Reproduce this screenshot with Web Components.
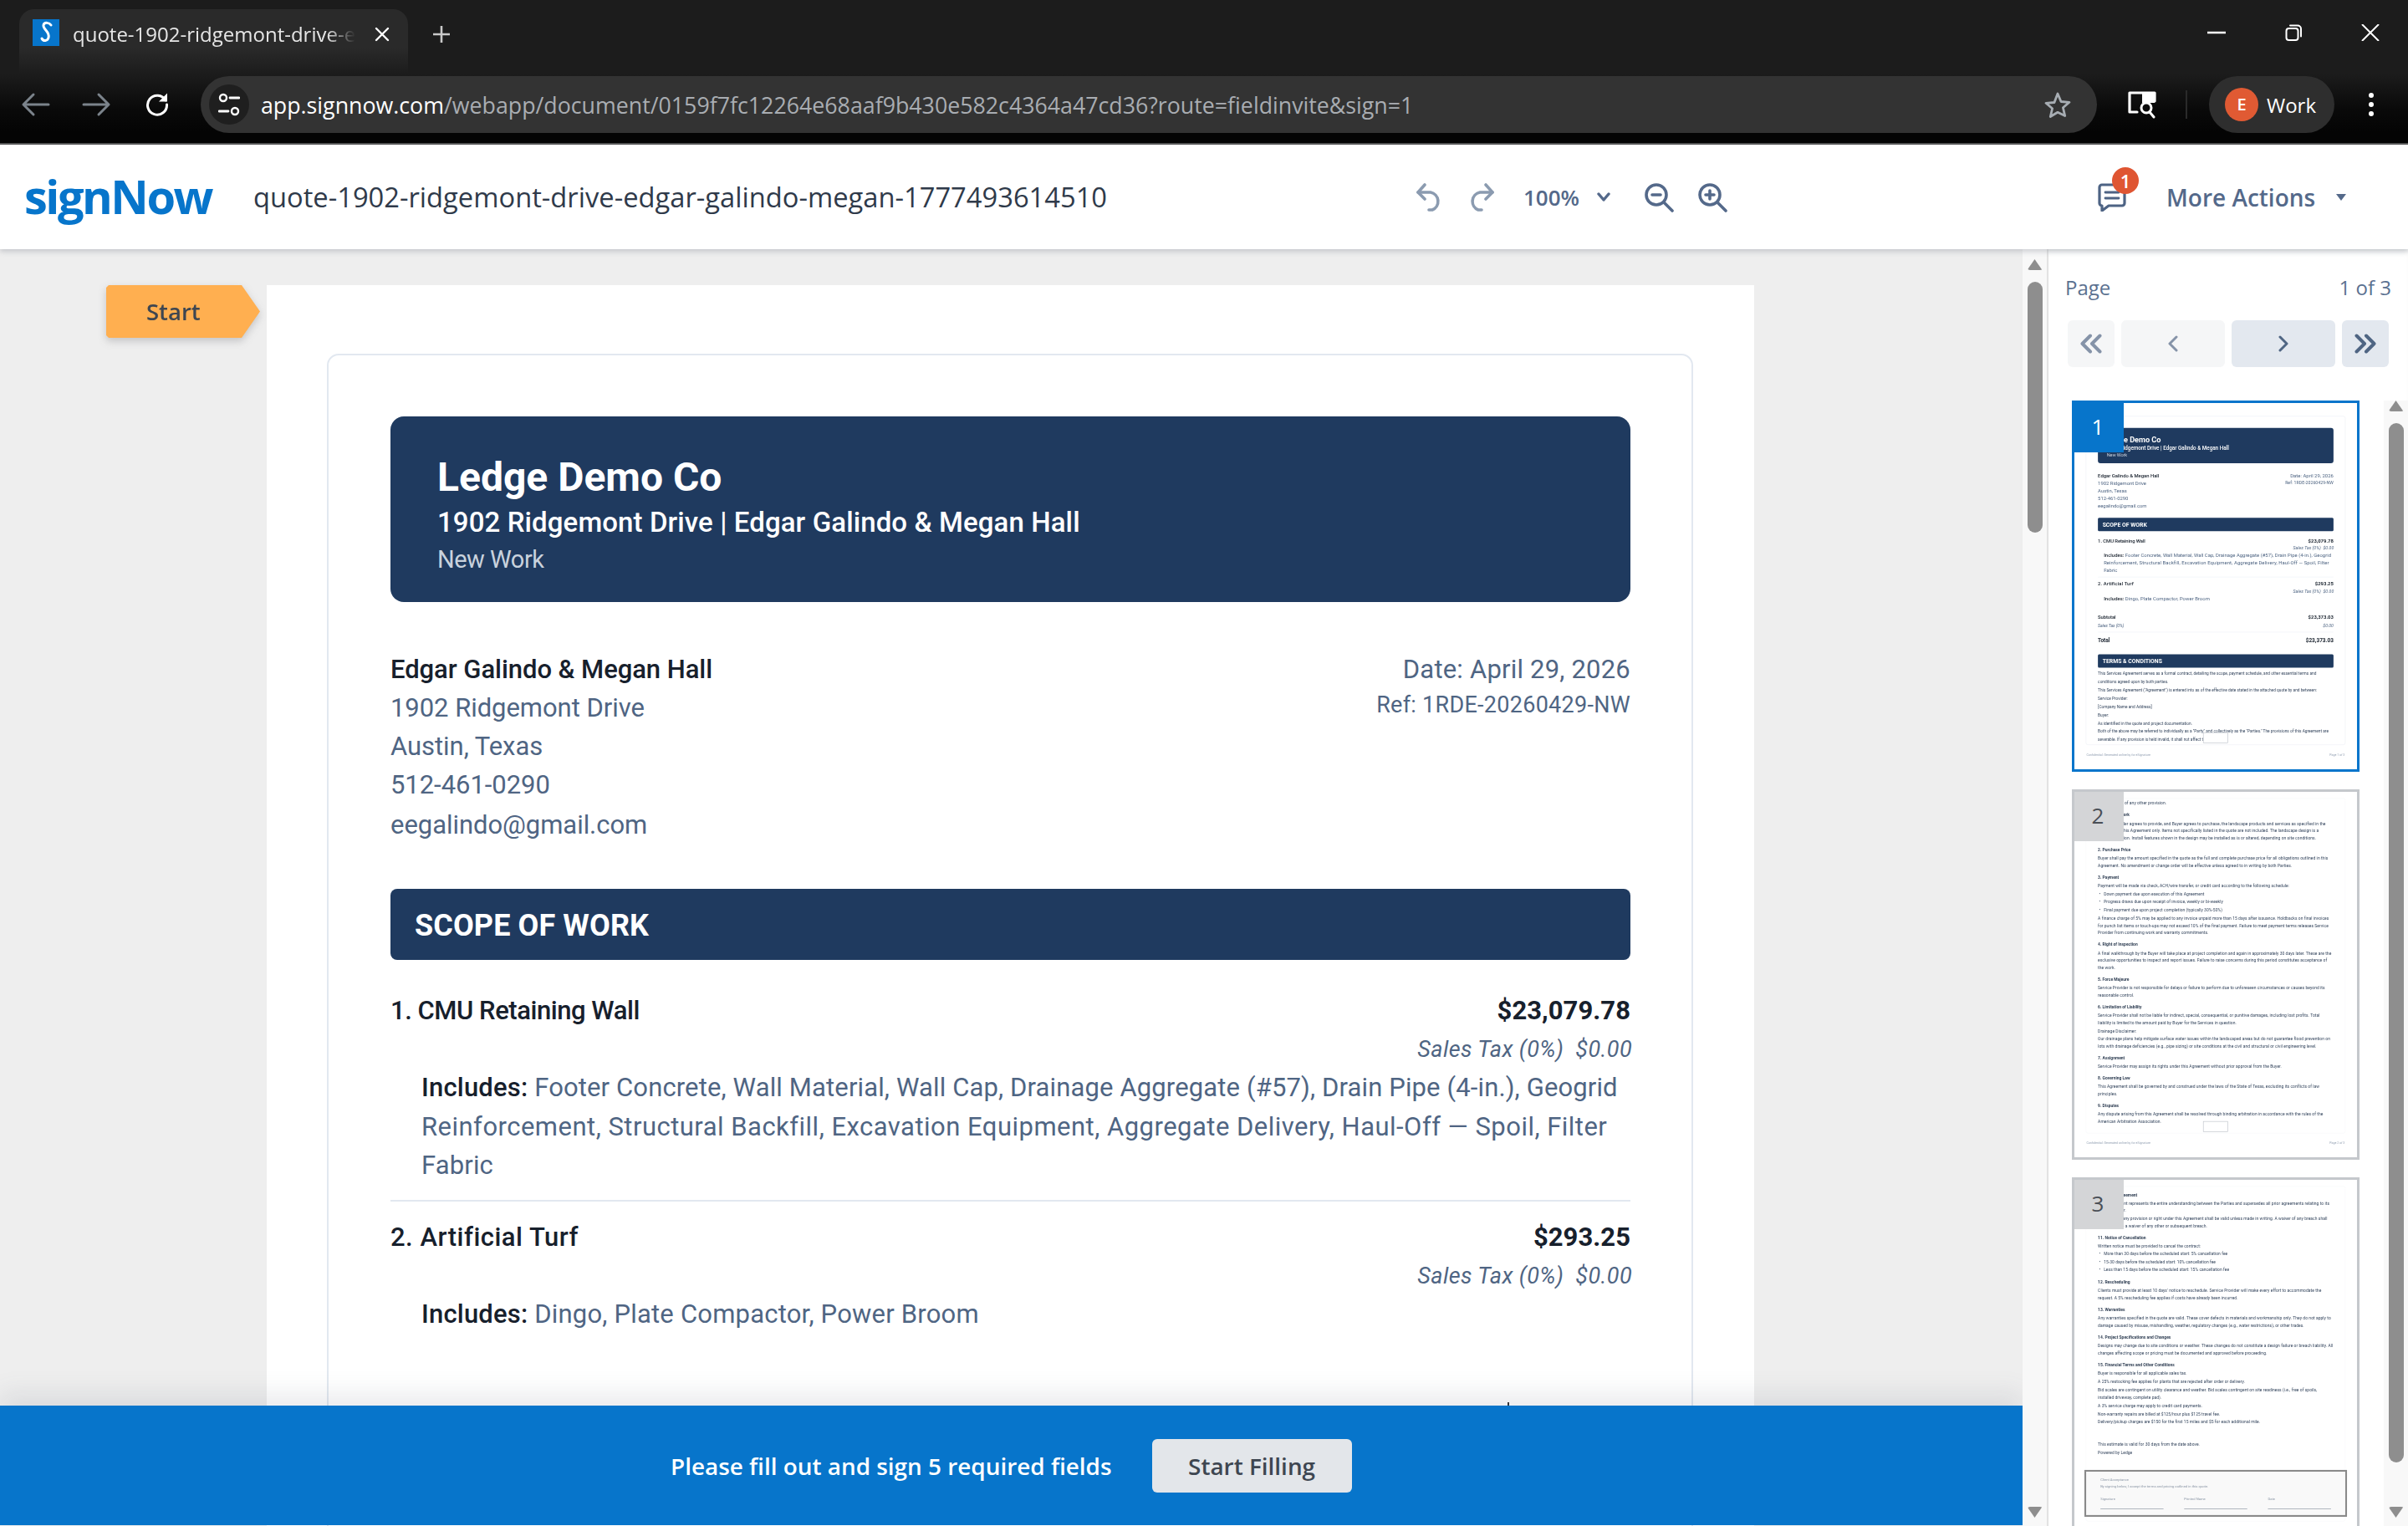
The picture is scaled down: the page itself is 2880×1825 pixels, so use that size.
<!doctype html>
<html lang="en">
<head>
<meta charset="utf-8">
<title>signNow</title>
<style>
  html, body { margin: 0; height: 100%; }
  body { width: 2880px; height: 1825px; overflow: hidden; display: flex; flex-direction: column; font-family: "Open Sans", sans-serif; }
</style>
</head>
<body>
<browser-chrome></browser-chrome>
<sn-header></sn-header>
<sn-workspace></sn-workspace>

<script>
// small helper so every element below is just a style string and a markup string
function shell(name, css, html, setup) {
  customElements.define(name, class extends HTMLElement {
    connectedCallback() {
      if (this.shadowRoot) return;
      const root = this.attachShadow({ mode: "open" });
      const body = typeof html === "function" ? html(this) : html;
      root.innerHTML = `<style>${css}</style>${body}`;
      if (setup) setup(root, this);
    }
  });
}

const svg = (w, h, box, inner, extra = "") =>
  `<svg width="${w}" height="${h}" viewBox="${box}" fill="none" stroke-linecap="round" stroke-linejoin="round" ${extra}>${inner}</svg>`;

// ---- browser frame ----
shell("browser-chrome", `
  :host { display: block; flex: none; height: 173px; box-sizing: border-box; border-bottom: 2px solid #565656; color: #fff; }
  .strip { height: 88px; background: #1c1c1c; display: flex; align-items: flex-start; padding-left: 23px; box-sizing: border-box; position: relative; }
  .tab { width: 465px; height: 77px; margin-top: 11px; border-radius: 18px 18px 0 0; background: linear-gradient(#2a2a2a, #2a2a2a 60%, #1c1c1c); display: flex; align-items: flex-start; box-sizing: border-box; padding: 12px 0 0 16px; }
  .fav { width: 32px; height: 32px; background: #0775cb; display: flex; align-items: center; justify-content: center; flex: none; }
  .tab span { margin-left: 16px; width: 338px; overflow: hidden; white-space: nowrap; font-size: 24px; line-height: 36px; color: #e6e6e6; -webkit-mask-image: linear-gradient(90deg, #000 90%, transparent); mask-image: linear-gradient(90deg, #000 90%, transparent); }
  .close { margin: 8px 0 0 22px; display: flex; }
  .plus { margin: 30px 0 0 29px; display: flex; }
  .win { margin-left: auto; display: flex; gap: 71px; padding: 29px 34px 0 0; align-items: center; height: 20px; }
  .bar { height: 83px; background: linear-gradient(#1c1c1c, #0a0a0a 50%, #040404 85%); display: flex; align-items: flex-start; position: relative; }
  .nav { display: flex; width: 240px; flex: none; height: 68px; margin-top: 3px; align-items: center; padding-left: 25px; box-sizing: border-box; }
  .nav svg + svg { margin-left: 36px; }
  .nav svg:last-child { margin-left: 40px; }
  .omni { flex: none; width: 2268px; height: 68px; margin-top: 3px; border-radius: 34px; background: #333; display: flex; align-items: center; box-sizing: border-box; padding-left: 10px; }
  .tune { width: 48px; height: 48px; border-radius: 50%; background: #1f1f1f; display: flex; align-items: center; justify-content: center; flex: none; }
  .url { margin-left: 14px; font-size: 26.75px; white-space: nowrap; color: #a9adb2; flex: 1; }
  .url b { font-weight: 400; color: #fff; }
  .omni svg.star { margin-right: 31px; }
  .tools { display: flex; align-items: center; height: 68px; margin-top: 3px; flex: 1; }
  .lens { margin-left: 36px; display: flex; }
  .sep { width: 2px; height: 34px; background: #2a2a2a; margin-left: 34px; }
  .pill { margin-left: 26px; width: 150px; height: 68px; border-radius: 34px; background: #2e2e2e; display: flex; align-items: center; padding-left: 19px; box-sizing: border-box; font-size: 24px; }
  .pill i { width: 40px; height: 40px; border-radius: 50%; background: #e05a33; font: 600 20px/40px "Open Sans", sans-serif; text-align: center; margin-right: 10px; flex: none; }
  .more { margin-left: 40px; display: flex; }
`, `
  <div class="strip">
    <div class="tab">
      <div class="fav">${svg(24, 30, "0 0 24 30", `<path d="M18 6c-2-3-8-4-9 0-1 5 8 8 6 15-1 4-6 5-8 1" stroke="#fff" stroke-width="3"/>`)}</div>
      <span>quote-1902-ridgemont-drive-edgar-galindo</span>
      <div class="close">${svg(20, 20, "0 0 20 20", `<path d="M3 3l14 14M17 3L3 17" stroke="#fff" stroke-width="2.4"/>`)}</div>
    </div>
    <div class="plus">${svg(22, 22, "0 0 22 22", `<path d="M11 1v20M1 11h20" stroke="#c9c9c9" stroke-width="2.6" stroke-linecap="butt"/>`)}</div>
    <div class="win">
      ${svg(22, 4, "0 0 22 4", `<path d="M0 2h22" stroke="#fff" stroke-width="2.4"/>`)}
      ${svg(20, 20, "0 0 20 20", `<rect x="1.5" y="5" width="14" height="14" rx="3" stroke="#fff" stroke-width="2"/><path d="M6 1.5h9a4 4 0 0 1 4 4v9" stroke="#fff" stroke-width="2"/>`)}
      ${svg(22, 20, "0 0 22 20", `<path d="M1 0l20 20M21 0L1 20" stroke="#fff" stroke-width="2" stroke-linecap="butt"/>`)}
    </div>
  </div>
  <div class="bar">
    <div class="nav">
      ${svg(36, 30, "0 0 36 30", `<path d="M15 3L3 15l12 12M3 15h30" stroke="#7b838b" stroke-width="3"/>`)}
      ${svg(36, 30, "0 0 36 30", `<path d="M21 3l12 12-12 12M33 15H3" stroke="#7b838b" stroke-width="3"/>`)}
      ${svg(30, 30, "0 0 30 30", `<path d="M25 10A11.5 11.5 0 1 0 26.500 15" stroke="#fff" stroke-width="3"/><path d="M27 1.500v10h-10z" fill="#fff"/>`)}
    </div>
    <div class="omni">
      <div class="tune">${svg(26, 28, "0 0 26 28", `<circle cx="6" cy="6" r="4" stroke="#fff" stroke-width="2.4"/><path d="M14 6h11M1 22h11" stroke="#fff" stroke-width="2.8"/><circle cx="20" cy="22" r="4" stroke="#fff" stroke-width="2.4"/>`)}</div>
      <div class="url"><b>app.signnow.com</b>/webapp/document/0159f7fc12264e68aaf9b430e582c4364a47cd36?route=fieldinvite&amp;sign=1</div>
      ${svg(32, 32, "0 0 32 32", `<path d="M16 3l4 9.500 10 .8-7.600 6.500 2.300 9.700L16 25.300 7.300 30.500l2.300-9.700L2 14.300l10-.8z" stroke="#a7adb3" stroke-width="2.800"/>`, `class="star"`)}
    </div>
    <div class="tools">
      <div class="lens">${svg(36, 34, "0 0 36 34", `<path d="M12 26H3V3h30v10" stroke="#fff" stroke-width="3.200"/><path d="M18 3h15v12H18z" fill="#fff"/><circle cx="23" cy="21" r="6" stroke="#fff" stroke-width="3"/><path d="M27 26l5 6" stroke="#fff" stroke-width="3"/>`)}</div>
      <div class="sep"></div>
      <div class="pill"><i>E</i>Work</div>
      <div class="more">${svg(8, 30, "0 0 8 30", `<circle cx="4" cy="4" r="3" fill="#fff"/><circle cx="4" cy="15" r="3" fill="#fff"/><circle cx="4" cy="26" r="3" fill="#fff"/>`)}</div>
    </div>
  </div>
`);

// ---- signNow app bar ----
shell("sn-header", `
  :host { display: flex; flex: none; height: 125px; background: #fff; align-items: center; position: relative; z-index: 3; box-shadow: 0 3px 6px rgba(60,70,85,.22); color: #54698a; }
  .logo { margin: -4px 0 0 29px; width: 274px; font: 700 56px/1 "Open Sans", sans-serif; color: #0775cb; letter-spacing: -2.500px; flex: none; }
  .title { width: 1390px; flex: none; font-size: 32.700px; color: #2f3a4a; white-space: nowrap; }
  .tool { display: flex; align-items: center; flex: none; }
  .zoom { font-weight: 600; font-size: 26px; margin-left: 34px; width: 70px; }
  .chev { margin-left: 18px; }
  .chat { position: relative; margin-left: 443px; display: flex; }
  .badge { position: absolute; left: 17px; top: -19px; width: 32px; height: 32px; border-radius: 50%; background: #df5532; color: #fff; font: 600 22px/32px "Open Sans", sans-serif; text-align: center; }
  .more { margin-left: 48px; font-weight: 600; font-size: 28px; white-space: nowrap; }
  .caret { margin-left: 24px; }
`, `
  <div class="logo">signNow</div>
  <div class="title">quote-1902-ridgemont-drive-edgar-galindo-megan-1777493614510</div>
  <div class="tool">
    ${svg(34, 34, "0 0 34 34", `<path d="M11 2L3 11l8 8" stroke="#8b9bb0" stroke-width="3.600"/><path d="M3 11h15a11 11 0 0 1 2 21h-4" stroke="#8b9bb0" stroke-width="3.600"/>`)}
    <span style="width:27px"></span>
    ${svg(34, 34, "0 0 34 34", `<path d="M23 2l8 9-8 8" stroke="#8b9bb0" stroke-width="3.600"/><path d="M31 11H16a11 11 0 0 0-2 21h4" stroke="#8b9bb0" stroke-width="3.600"/>`)}
    <span class="zoom">100%</span>
    ${svg(16, 12, "0 0 16 12", `<path d="M2 2l6 7 6-7" stroke="#54698a" stroke-width="3.400"/>`, `class="chev"`)}
    <span style="width:40px"></span>
    ${svg(36, 36, "0 0 36 36", `<circle cx="15" cy="15" r="12" stroke="#54698a" stroke-width="3.600"/><path d="M24 24l10 10" stroke="#54698a" stroke-width="3.600"/><path d="M10 15h10" stroke="#54698a" stroke-width="3.600"/>`)}
    <span style="width:28px"></span>
    ${svg(36, 36, "0 0 36 36", `<circle cx="15" cy="15" r="12" stroke="#54698a" stroke-width="3.600"/><path d="M24 24l10 10" stroke="#54698a" stroke-width="3.600"/><path d="M10 15h10M15 10v10" stroke="#54698a" stroke-width="3.600"/>`)}
  </div>
  <div class="chat">
    ${svg(34, 34, "0 0 34 34", `<path d="M5 2h24a3 3 0 0 1 3 3v19a3 3 0 0 1-3 3H13l-8 6v-6a3 3 0 0 1-3-3V5a3 3 0 0 1 3-3z" stroke="#4d6384" stroke-width="3.200"/><path d="M9 11h16M9 18h16" stroke="#4d6384" stroke-width="2.800"/>`)}
    <div class="badge">1</div>
  </div>
  <div class="more">More Actions</div>
  ${svg(14, 10, "0 0 14 10", `<path d="M1 1h12L7 9z" fill="#54698a"/>`, `class="caret"`)}
`);

// ---- the quote document, page 1 ----
const sheetCss = `
  :host { display: block; width: 1779px; height: 2300px; box-sizing: border-box; background: #fff; padding: 82px 73px 0 72px; font-family: Roboto, sans-serif; color: #4f6583; position: relative; }
  .card { border: 2px solid #e2e8f0; border-radius: 14px; height: 2070px; box-sizing: border-box; padding: 73px 73px 0 74px; }
  .foot { display: flex; justify-content: space-between; font-size: 19px; color: #94a1b3; padding: 50px 4px 0; }
  .field { position: absolute; left: 810px; top: 2073px; width: 158px; height: 68px; box-sizing: border-box; border: 3px solid #b6bcc4; background: #fff; }
`;
shell("quote-sheet", sheetCss + `
  .hero { height: 222px; background: #1f3a5f; border-radius: 16px; color: #fff; box-sizing: border-box; padding: 48px 0 0 56px; }
  .hero h1 { margin: 0; font-size: 48px; line-height: 50px; font-weight: 700; }
  .hero h2 { margin: 4px 0 0; font-size: 33px; line-height: 50px; font-weight: 500; letter-spacing: .1px; }
  .hero p { margin: 0; font-size: 29px; line-height: 38px; color: #c9d2dd; letter-spacing: -.5px; }
  .meta { display: flex; justify-content: space-between; margin-top: 58px; font-size: 31px; line-height: 46px; letter-spacing: -.05px; }
  .meta strong { display: block; color: #17202c; font-weight: 500; }
  .meta .mail { display: block; margin-top: 2px; }
  .meta .r { text-align: right; letter-spacing: .2px; }
  .meta small { display: block; font-size: 27px; line-height: 38px; letter-spacing: .28px; }
  .bar { margin-top: 53px; height: 85px; background: #1f3a5f; border-radius: 8px; color: #fff; font-size: 36px; line-height: 89px; font-weight: 700; padding-left: 29px; letter-spacing: .1px; }
  .item { margin-top: 38px; }
  .item + .item { margin-top: 20px; }
  .row { display: flex; justify-content: space-between; font-size: 31px; line-height: 46px; letter-spacing: -.45px; color: #17202c; font-weight: 500; }
  .row span + span { letter-spacing: .05px; font-weight: 700; }
  .tax { text-align: right; font-style: italic; font-size: 27px; line-height: 46px; letter-spacing: .38px; margin-right: -2px; white-space: pre; }
  .inc { margin: 0 0 0 37px; font-size: 31px; line-height: 46.500px; letter-spacing: .13px; white-space: nowrap; }
  .inc b { color: #17202c; font-weight: 500; letter-spacing: .2px; }
  .inc .wide { letter-spacing: .48px; }
  hr { border: 0; border-top: 2px solid #e2e8f0; margin: 17px 0 0; }
  .sum { margin-top: 71px; }
  .sum .row.i { font-weight: 400; font-style: italic; color: #4f6583; font-size: 27px; margin-top: 7px; }
  .sum .row.i span { font-weight: 400; }
  .sum .row.t { margin-top: 27px; font-weight: 700; font-size: 34px; }
  .terms { margin: 12px 0 0; font-size: 25px; line-height: 52px; color: #33445c; letter-spacing: .1px; }
  .terms p { margin: 0; }
  .bar.two { margin-top: 65px; }
`, (el) => `
  <div class="card">
    <div class="hero"><h1>Ledge Demo Co</h1><h2>1902 Ridgemont Drive | Edgar Galindo &amp; Megan Hall</h2><p>New Work</p></div>
    <div class="meta">
      <div><strong>Edgar Galindo &amp; Megan Hall</strong>1902 Ridgemont Drive<br>Austin, Texas<br>512-461-0290<span class="mail">eegalindo@gmail.com</span></div>
      <div class="r">Date: April 29, 2026<small>Ref: 1RDE-20260429-NW</small></div>
    </div>
    <div class="bar">SCOPE OF WORK</div>
    <div class="item">
      <div class="row"><span>1. CMU Retaining Wall</span><span>$23,079.78</span></div>
      <div class="tax">Sales Tax (0%)  $0.00</div>
      <p class="inc"><b>Includes:</b> <span>Footer Concrete, Wall Material, Wall Cap, Drainage Aggregate (#57), Drain Pipe (4-in.), Geogrid</span><br><span class="wide">Reinforcement, Structural Backfill, Excavation Equipment, Aggregate Delivery, Haul-Off — Spoil, Filter</span><br><span>Fabric</span></p>
      <hr>
    </div>
    <div class="item">
      <div class="row"><span style="letter-spacing:.5px">2. Artificial Turf</span><span>$293.25</span></div>
      <div class="tax">Sales Tax (0%)  $0.00</div>
      <p class="inc"><b>Includes:</b> <span class="wide" style="letter-spacing:.2px">Dingo, Plate Compactor, Power Broom</span></p>
    </div>
    ${el.hasAttribute("fold") ? "" : `<div class="sum">
      <div class="row"><span>Subtotal</span><span>$23,373.03</span></div>
      <div class="row i"><span>Sales Tax (0%)</span><span>$0.00</span></div>
      <hr>
      <div class="row t"><span>Total</span><span>$23,373.03</span></div>
    </div>
    <div class="bar two">TERMS &amp; CONDITIONS</div>
    <div class="terms"><p>This Services Agreement serves as a formal contract, detailing the scope, payment schedule, and other essential terms and conditions agreed upon by both parties.</p><p>This Services Agreement ("Agreement") is entered into as of the effective date stated in the attached quote by and between:</p><p>Service Provider:</p><p>[Company Name and Address]</p><p>Buyer:</p><p>As identified in the quote and project documentation.</p><p>Both of the above may be referred to individually as a "Party" and collectively as the "Parties." The provisions of this Agreement are severable. If any provision is held invalid, it shall not affect the validity or</p></div>`}
  </div>
  ${el.hasAttribute("fold") ? "" : `<div class="field"></div><div class="foot"><span>Confidential. Generated online by for eSignature</span><span>Page 1 of 3</span></div>`}
`);

// ---- the two pages of terms, only ever seen as thumbnails ----
const TERMS = {
  2: [
    ["p", "enforceability of any other provision."],
    ["h", "1. Scope of Work"],
    ["p", "Service Provider agrees to provide, and Buyer agrees to purchase, the landscape products and services as specified in the quote and in this Agreement only. Items not specifically listed in the quote are not included. The landscape design is a general intention. Install features shown in the design may be installed as is or altered, depending on site conditions."],
    ["h", "2. Purchase Price"],
    ["p", "Buyer shall pay the amount specified in the quote as the full and complete purchase price for all obligations outlined in this Agreement. No amendment or change order will be effective unless agreed to in writing by both Parties."],
    ["h", "3. Payment"],
    ["p", "Payment will be made via check, ACH/wire transfer, or credit card according to the following schedule:"],
    ["l", "Down payment due upon execution of this Agreement"],
    ["l", "Progress draws due upon receipt of invoice, weekly or bi-weekly"],
    ["l", "Final payment due upon project completion (typically 30%-50%)"],
    ["p", "A finance charge of 5% may be applied to any invoice unpaid more than 15 days after issuance. Holdbacks on final invoices for punch list items or touch-ups may not exceed 10% of the final payment. Failure to meet payment terms releases Service Provider from continuing work and warranty commitments."],
    ["h", "4. Right of Inspection"],
    ["p", "A final walkthrough by the Buyer will take place at project completion and again in approximately 30 days later. These are the exclusive opportunities to inspect and report issues. Failure to raise concerns during this period constitutes acceptance of the work."],
    ["h", "5. Force Majeure"],
    ["p", "Service Provider is not responsible for delays or failure to perform due to unforeseen circumstances or causes beyond its reasonable control."],
    ["h", "6. Limitation of Liability"],
    ["p", "Service Provider shall not be liable for indirect, special, consequential, or punitive damages, including lost profits. Total liability is limited to the amount paid by Buyer for the Services in question."],
    ["p", "Drainage Disclaimer:<br>Our drainage plans help mitigate surface water issues within the landscaped areas but do not guarantee flood prevention on lots with drainage deficiencies (e.g., pipe sizing) or site conditions at the civil and structural or civil engineering level."],
    ["h", "7. Assignment"],
    ["p", "Service Provider may assign its rights under this Agreement without prior approval from the Buyer."],
    ["h", "8. Governing Law"],
    ["p", "This Agreement shall be governed by and construed under the laws of the State of Texas, excluding its conflicts of law principles."],
    ["h", "9. Disputes"],
    ["p", "Any dispute arising from this Agreement shall be resolved through binding arbitration in accordance with the rules of the American Arbitration Association."],
  ],
  3: [
    ["h", "10. Entire Agreement"],
    ["p", "This Agreement represents the entire understanding between the Parties and supersedes all prior agreements relating to its subject matter."],
    ["p", "No waiver of any provision or right under this Agreement shall be valid unless made in writing. A waiver of any breach shall not constitute a waiver of any other or subsequent breach."],
    ["h", "11. Notice of Cancellation"],
    ["p", "Written notice must be provided to cancel the contract:"],
    ["l", "More than 30 days before the scheduled start: 5% cancellation fee"],
    ["l", "15-30 days before the scheduled start: 10% cancellation fee"],
    ["l", "Less than 15 days before the scheduled start: 15% cancellation fee"],
    ["h", "12. Rescheduling"],
    ["p", "Clients must provide at least 10 days' notice to reschedule. Service Provider will make every effort to accommodate the request. A 5% rescheduling fee applies if costs have already been incurred."],
    ["h", "13. Warranties"],
    ["p", "Any warranties specified in the quote are valid. These cover defects in materials and workmanship only. They do not apply to damage caused by misuse, mishandling, weather, regulatory changes (e.g., water restrictions), or other trades."],
    ["h", "14. Project Specifications and Changes"],
    ["p", "Designs may change due to site conditions or weather. These changes do not constitute a design failure or breach liability. All changes affecting scope or pricing must be documented and approved before proceeding."],
    ["h", "15. Financial Terms and Other Conditions"],
    ["p", "Buyer is responsible for all applicable sales tax."],
    ["p", "A 25% restocking fee applies for plants that are rejected after order or delivery."],
    ["p", "Bid scales are contingent on utility clearance and weather. Bid scales contingent on site readiness (i.e., free of spoils, installed driveway, complete pad)."],
    ["p", "A 3% service charge may apply to credit card payments."],
    ["p", "Non-warranty repairs are billed at $125/hour plus $125 travel fee."],
    ["p", "Delivery/pickup charges are $150 for the first 15 miles and $5 for each additional mile."],
    ["s", ""],
    ["p", "This estimate is valid for 30 days from the date above."],
    ["p", "Powered by Ledge"],
  ],
};
shell("terms-sheet", sheetCss + `
  :host { padding-top: 40px; }
  .card { border-color: #f1f4f8; padding-top: 0; height: 2110px; }
  .h { font-weight: 700; font-size: 26px; line-height: 47px; margin-top: 29px; color: #2e3d52; }
  .p { font-size: 26px; line-height: 46px; color: #33445c; letter-spacing: .3px; margin-top: 6px; }
  .l { font-size: 26px; line-height: 50px; color: #33445c; padding-left: 37px; letter-spacing: .3px; }
  .l::before { content: "•"; margin-left: -30px; width: 30px; display: inline-block; }
  .s { height: 86px; }
  .sign { position: absolute; left: 63px; width: 1653px; top: 1826px; height: 295px; box-sizing: border-box; border: 11px solid #8a8a8a; background: #f9f9f9; padding: 26px 90px; color: #8d98a7; font-size: 22px; line-height: 46px; }
  .cols { display: grid; grid-template-columns: 1fr 1fr 1fr; gap: 130px; margin-top: 30px; }
  .cols span { border-bottom: 4px solid #9aa2ad; padding-bottom: 38px; }
`, (el) => {
  const page = el.getAttribute("page");
  const rows = TERMS[page].map(([k, t]) => `<div class="${k}">${t}</div>`).join("");
  const extra = page === "3"
    ? `<div class="sign"><div>Client Acceptance</div><div>By signing below, I accept the terms and pricing outlined in this quote.</div><div class="cols"><span>Signature</span><span>Printed Name</span><span>Date</span></div></div>`
    : `<div class="field"></div><div class="foot"><span>Confidential. Generated online by for eSignature</span><span>Page 2 of 3</span></div>`;
  return `<div class="card">${rows}</div>${extra}`;
});

// ---- one thumbnail in the page rail ----
shell("page-thumb", `
  :host { display: block; width: 344px; height: var(--h, 443px); box-sizing: border-box; border: 3px solid #c5c8cc; position: relative; overflow: hidden; background: #fff; flex: none; }
  :host([active]) { border-color: #0775cb; }
  .num { position: absolute; left: -3px; top: -3px; z-index: 1; width: 62px; height: 62px; background: #d4d5d7; color: #4a4f56; font: 400 26px/62px "Open Sans", sans-serif; text-align: center; }
  :host([active]) .num { background: #0775cb; color: #fff; }
  .scale { width: 1779px; transform: scale(.19); transform-origin: 0 0; }
`, (el) => `<div class="num">${el.getAttribute("num")}</div><div class="scale"><slot></slot></div>`);

shell("scroll-track", `
  :host { display: flex; flex-direction: column; align-items: center; width: 29px; box-sizing: border-box; background: #f8f8f8; position: relative; flex: none; }
  .up, .down { width: 18px; height: 13px; background: #8e8e8e; flex: none; }
  .up { clip-path: polygon(50% 0, 100% 100%, 0 100%); border-radius: 3px; }
  .down { clip-path: polygon(0 0, 100% 0, 50% 100%); border-radius: 3px; }
  .thumb { width: 18px; border-radius: 9px; background: #8e8e8e; flex: none; }
  .fill { flex: 1; }
`, (el) => `
  <div style="height:var(--pad, 12px);flex:none"></div>
  <div class="up"></div><div style="height:14px;flex:none"></div>
  <div class="thumb" style="height:${el.getAttribute("thumb")}px"></div>
  <div class="fill"></div>
  <div class="down"></div><div style="height:10px;flex:none"></div>
`);

// ---- page rail on the right ----
shell("page-rail", `
  :host { display: flex; flex-direction: column; width: 432px; flex: none; background: #fff; border-left: 2px solid #e2e2e2; box-sizing: border-box; overflow: hidden; box-shadow: inset 0 6px 6px -4px rgba(60,70,85,.12); }
  .top { padding: 31px 20px 0 20px; }
  .line { display: flex; justify-content: space-between; font-size: 24px; line-height: 30px; color: #5b7190; }
  .nav { display: grid; grid-template-columns: 56px 124px 124px 56px; gap: 8px; margin: 24px 0 0 3px; height: 56px; }
  .nav div { border-radius: 6px; display: flex; align-items: center; justify-content: center; background: #e3e8ef; }
  .nav .off { background: #f5f6f7; }
  .list { display: flex; flex: 1; min-height: 0; margin-top: 40px; }
  .col { width: 373px; flex: none; padding-left: 28px; display: flex; flex-direction: column; gap: 21px; box-sizing: border-box; overflow: hidden; }
  scroll-track { --pad: 0px; margin-left: 28px; }
`, `
  <div class="top">
    <div class="line"><span>Page</span><span>1 of 3</span></div>
    <div class="nav">
      <div class="off">${svg(28, 24, "0 0 28 24", `<path d="M13 2.500L3.500 12l9.500 9.500M24.500 2.500L15 12l9.500 9.500" stroke="#8593a8" stroke-width="4"/>`)}</div>
      <div class="off">${svg(12, 20, "0 0 12 20", `<path d="M10 2L2 10l8 8" stroke="#8593a8" stroke-width="3"/>`)}</div>
      <div>${svg(12, 20, "0 0 12 20", `<path d="M2 2l8 8-8 8" stroke="#4f6583" stroke-width="3"/>`)}</div>
      <div>${svg(28, 24, "0 0 28 24", `<path d="M3.500 2.500L13 12l-9.500 9.500M15 2.500L24.500 12 15 21.500" stroke="#4f6583" stroke-width="4"/>`)}</div>
    </div>
  </div>
  <div class="list">
    <div class="col">
      <page-thumb num="1" active style="--h:444px"><quote-sheet></quote-sheet></page-thumb>
      <page-thumb num="2"><terms-sheet page="2"></terms-sheet></page-thumb>
      <page-thumb num="3" style="--h:440px"><terms-sheet page="3"></terms-sheet></page-thumb>
    </div>
    <scroll-track thumb="1243"></scroll-track>
  </div>
`);

// ---- everything below the app bar ----
shell("sn-workspace", `
  :host { display: flex; flex: 1; min-height: 0; position: relative; background: #eee; overflow: hidden; }
  .doc { width: 2419px; flex: none; position: relative; overflow: hidden; padding: 43px 0 0 319px; box-sizing: border-box; }
  .start { position: absolute; left: 127px; top: 43px; width: 184px; height: 63px; filter: drop-shadow(0 4px 5px rgba(70,70,80,.25)); }
  .start div { height: 100%; background: #ffaf50; clip-path: polygon(3px 0, 162px 0, 184px 31.500px, 162px 63px, 3px 63px, 0 60px, 0 3px); font: 600 27.500px/63px "Open Sans", sans-serif; color: #3e4651; padding-left: 48px; box-sizing: border-box; }
  .cta { position: absolute; left: 0; right: 0; bottom: 1px; height: 143px; background: #0775cb; display: flex; align-items: center; padding-left: 802px; box-sizing: border-box; box-shadow: 0 -14px 28px rgba(90,100,115,.13); color: #fff; font-size: 27.900px; font-weight: 600; }
  .cta button { all: unset; margin-left: 48px; width: 239px; height: 64px; border-radius: 6px; background: #e3e6ea; color: #3e4651; font-size: 27.900px; font-weight: 600; text-align: center; }
  .tick { position: absolute; left: 1803px; bottom: 144px; width: 2px; height: 4px; background: #333; }
  scroll-track { --pad: 12px; }
`, `
  <div class="doc">
    <quote-sheet fold></quote-sheet>
    <div class="start"><div>Start</div></div>
    <div class="tick"></div>
    <div class="cta">Please fill out and sign 5 required fields<button>Start Filling</button></div>
  </div>
  <scroll-track thumb="300"></scroll-track>
  <page-rail></page-rail>
`);
</script>
</body>
</html>
